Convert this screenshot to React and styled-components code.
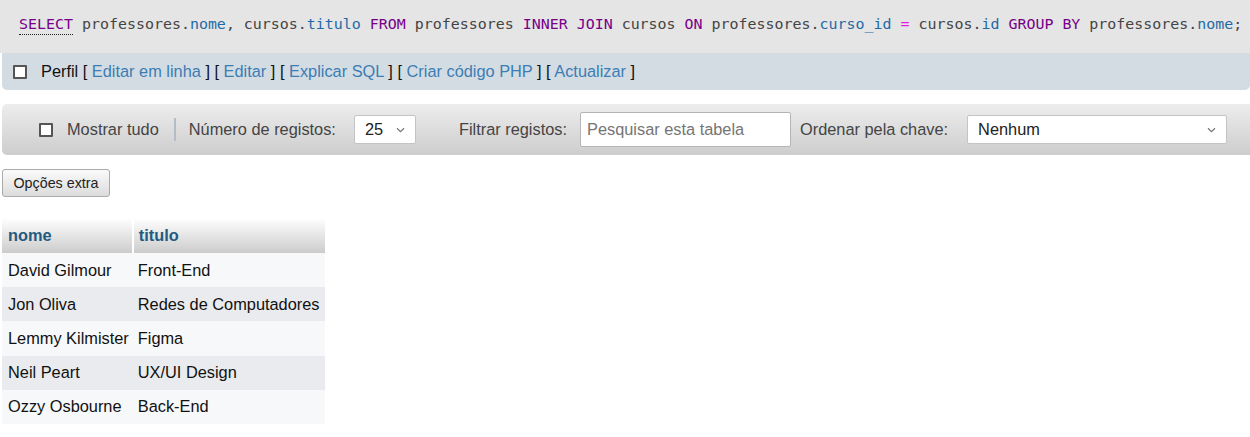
import React from "react";
import styled, { createGlobalStyle } from "styled-components";

const GlobalStyle = createGlobalStyle`
  body {
    margin: 0;
    background: #fff;
    font-family: "Liberation Sans", Arial, sans-serif;
    color: #333;
  }
`;

const rows = [
  { nome: "David Gilmour", titulo: "Front-End" },
  { nome: "Jon Oliva", titulo: "Redes de Computadores" },
  { nome: "Lemmy Kilmister", titulo: "Figma" },
  { nome: "Neil Peart", titulo: "UX/UI Design" },
  { nome: "Ozzy Osbourne", titulo: "Back-End" },
];

// tokens of the query: k = keyword, v = column, o = operator
const query = [
  ["k", "SELECT"], ["t", " professores."], ["v", "nome"], ["t", ", cursos."], ["v", "titulo"],
  ["t", " "], ["k", "FROM"], ["t", " professores "], ["k", "INNER JOIN"], ["t", " cursos "],
  ["k", "ON"], ["t", " professores."], ["v", "curso_id"], ["t", " "], ["o", "="], ["t", " cursos."],
  ["v", "id"], ["t", " "], ["k", "GROUP BY"], ["t", " professores."], ["v", "nome"], ["t", ";"],
];

const Chevron = () => (
  <svg width="9" height="6" viewBox="0 0 9 6">
    <path d="M1 1.2 L4.5 4.6 L8 1.2" fill="none" stroke="#777" strokeWidth="1.2" />
  </svg>
);

export default function App() {
  return (
    <Page>
      <GlobalStyle />
      <SqlBox>
        <Code>
          {query.map(([kind, text], i) =>
            kind === "k" && i === 0 ? (
              <Select0 key={i}>{text}</Select0>
            ) : (
              <Tok key={i} $kind={kind}>{text}</Tok>
            )
          )}
        </Code>
      </SqlBox>
      <ActionBar>
        <Check />
        <ActionText>
          Perfil [ <A>Editar em linha</A> ] [ <A>Editar</A> ] [ <A>Explicar SQL</A> ] [{" "}
          <A>Criar código PHP</A> ] [ <A>Actualizar</A> ]
        </ActionText>
      </ActionBar>

      <Toolbar>
        <Check />
        <ToolLabel $ml={14}>Mostrar tudo</ToolLabel>
        <Separator />
        <ToolLabel>Número de registos:</ToolLabel>
        <SelectBox $w={62} $ml={18}>
          <span>25</span>
          <Chevron />
        </SelectBox>
        <ToolLabel $ml={43}>Filtrar registos:</ToolLabel>
        <Search placeholder="Pesquisar esta tabela" />
        <ToolLabel $ml={9}>Ordenar pela chave:</ToolLabel>
        <SelectBox $w={260} $ml={19}>
          <span>Nenhum</span>
          <Chevron />
        </SelectBox>
      </Toolbar>

      <Button>Opções extra</Button>

      <Table>
        <thead>
          <tr>
            <Th>nome</Th>
            <Th>titulo</Th>
          </tr>
        </thead>
        <tbody>
          {rows.map((r, i) => (
            <Tr key={r.nome} $even={i % 2 === 1}>
              <Td>{r.nome}</Td>
              <Td>{r.titulo}</Td>
            </Tr>
          ))}
        </tbody>
      </Table>
    </Page>
  );
}

const Page = styled.div`
  width: 1250px;
  padding-left: 2px;
  box-sizing: border-box;
`;

const SqlBox = styled.div`
  height: 53px;
  margin-left: -2px;
  background: #e5e5e5;
  display: flex;
  align-items: center;
  padding-left: 19px;
  box-sizing: border-box;
`;

const Code = styled.div`
  font-family: "DejaVu Sans Mono", "Liberation Mono", monospace;
  font-size: 14.95px;
  white-space: pre;
  color: #444;
  margin-top: -6px;
`;

const Tok = styled.span`
  color: ${(p) => (p.$kind === "k" ? "#770088" : p.$kind === "v" ? "#1f6aa5" : p.$kind === "o" ? "#e41de4" : "#444")};
`;

const Select0 = styled.span`
  color: #770088;
  border-bottom: 1px dotted #222;
  padding-bottom: 1px;
`;

const ActionBar = styled.div`
  height: 37px;
  background: #d3dce3;
  border-radius: 0 0 5px 5px;
  display: flex;
  align-items: center;
  padding-left: 11px;
`;

const Check = styled.span`
  width: 10px;
  height: 10px;
  border: 2px solid #555;
  border-radius: 1px;
  background: #fff;
  flex: none;
`;

const ActionText = styled.div`
  margin-left: 14px;
  font-size: 16.35px;
  color: #111;
`;

const A = styled.span`
  color: #3c7db4;
`;

const Toolbar = styled.div`
  margin-top: 14px;
  height: 51px;
  border-radius: 5px 0 0 5px;
  background: linear-gradient(#ededed, #cdcdcd);
  display: flex;
  align-items: center;
  padding-left: 37px;
`;

const ToolLabel = styled.span`
  margin-left: ${(p) => p.$ml || 0}px;
  font-size: 16.35px;
  color: #444;
  white-space: nowrap;
`;

const Separator = styled.span`
  width: 2px;
  height: 23px;
  background: #b3bcc7;
  margin: 0 13px 0 15px;
`;

const SelectBox = styled.div`
  width: ${(p) => p.$w}px;
  margin-left: ${(p) => p.$ml}px;
  height: 29px;
  box-sizing: border-box;
  background: #fff;
  border: 1px solid #c4c4c4;
  border-radius: 2px;
  display: flex;
  align-items: center;
  justify-content: space-between;
  padding: 0 10px 0 10px;
  font-size: 16.35px;
  color: #222;
`;

const Search = styled.input`
  margin-left: 13px;
  width: 211px;
  height: 35px;
  box-sizing: border-box;
  border: 1px solid #b5b5b5;
  border-radius: 2px;
  padding: 0 6px;
  font-family: "Liberation Sans", Arial, sans-serif;
  font-size: 16.35px;
  color: #222;
  outline: none;
  &::placeholder {
    color: #757575;
  }
`;

const Button = styled.button`
  display: block;
  margin-top: 14px;
  width: 108px;
  height: 28px;
  border: 1px solid #aaa;
  border-radius: 3px;
  background: linear-gradient(#fafafa, #dcdcdc);
  font-family: "Liberation Sans", Arial, sans-serif;
  font-size: 14.3px;
  color: #222;
  padding: 0;
`;

const Table = styled.table`
  margin-top: 21px;
  border-collapse: collapse;
  font-size: 16.35px;
`;

const Th = styled.th`
  height: 35px;
  padding: 0 4px 0 6px;
  text-align: left;
  font-weight: bold;
  color: #235a81;
  background: linear-gradient(#fff, #cccccc);
  border-right: 2px solid #fff;
  &:last-child {
    border-right: none;
    padding: 0 5px;
  }
`;

const Tr = styled.tr`
  background: ${(p) => (p.$even ? "#e9ebee" : "#f7f8fa")};
`;

const Td = styled.td`
  height: 34.2px;
  padding: 0 4px 0 6px;
  color: #111;
  white-space: nowrap;
  &:last-child {
    padding: 0 5px;
  }
`;
